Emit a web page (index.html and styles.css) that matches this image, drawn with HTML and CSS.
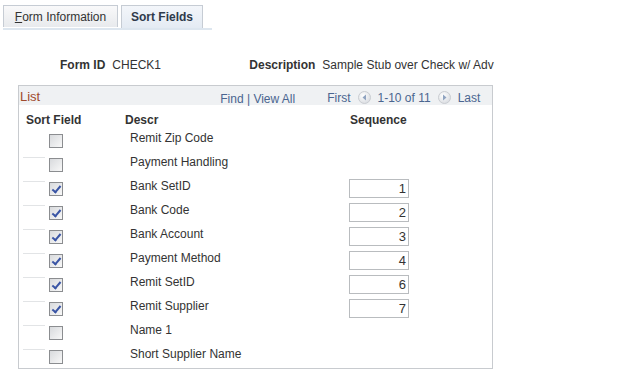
FILE: index.html
```html
<!DOCTYPE html>
<html lang="en">
<head>
    <meta charset="UTF-8">
    <title>Sort Fields</title>
    <link rel="stylesheet" href="styles.css">
</head>
<body>

<div class="tabs">
    <div class="tab"><u>F</u>orm Information</div>
    <div class="tab active">Sort Fields</div>
</div>

<div class="info">
    <span class="lbl">Form ID</span>
    <span class="val id">CHECK1</span>
    <span class="lbl">Description</span>
    <span class="val">Sample Stub over Check w/ Adv</span>
</div>

<div class="grid">
    <div class="grid-head">
        <span class="title">List</span>
        <span class="find"><a>Find</a> | <a>View All</a></span>
        <span class="nav">
            First
            <svg class="arrow" width="13" height="13" viewBox="0 0 13 13"><defs><radialGradient id="g" cx="0.4" cy="0.35" r="0.7"><stop offset="0" stop-color="#ffffff"/><stop offset="1" stop-color="#d8dbe0"/></radialGradient></defs><circle cx="6.5" cy="6.5" r="6" fill="url(#g)" stroke="#c9ccd1"/><path d="M8 3.5 L4.5 6.5 L8 9.5 Z" fill="#8fa3c0"/></svg>
            1-10 of 11
            <svg class="arrow" width="13" height="13" viewBox="0 0 13 13"><circle cx="6.5" cy="6.5" r="6" fill="url(#g)" stroke="#c9ccd1"/><path d="M5 3.5 L8.5 6.5 L5 9.5 Z" fill="#8fa3c0"/></svg>
            Last
        </span>
    </div>

    <div class="cols">
        <span class="c-sort">Sort Field</span>
        <span class="c-descr">Descr</span>
        <span class="c-seq">Sequence</span>
    </div>

    <div class="row first">
        <span class="c-sort"><span class="chk"></span></span>
        <span class="c-descr">Remit Zip Code</span>
    </div>
    <div class="row">
        <span class="c-sort"><span class="chk"></span></span>
        <span class="c-descr">Payment Handling</span>
    </div>
    <div class="row">
        <span class="c-sort"><span class="chk on"></span></span>
        <span class="c-descr">Bank SetID</span>
        <span class="seq">1</span>
    </div>
    <div class="row">
        <span class="c-sort"><span class="chk on"></span></span>
        <span class="c-descr">Bank Code</span>
        <span class="seq">2</span>
    </div>
    <div class="row">
        <span class="c-sort"><span class="chk on"></span></span>
        <span class="c-descr">Bank Account</span>
        <span class="seq">3</span>
    </div>
    <div class="row">
        <span class="c-sort"><span class="chk on"></span></span>
        <span class="c-descr">Payment Method</span>
        <span class="seq">4</span>
    </div>
    <div class="row">
        <span class="c-sort"><span class="chk on"></span></span>
        <span class="c-descr">Remit SetID</span>
        <span class="seq">6</span>
    </div>
    <div class="row">
        <span class="c-sort"><span class="chk on"></span></span>
        <span class="c-descr">Remit Supplier</span>
        <span class="seq">7</span>
    </div>
    <div class="row">
        <span class="c-sort"><span class="chk"></span></span>
        <span class="c-descr">Name 1</span>
    </div>
    <div class="row">
        <span class="c-sort"><span class="chk"></span></span>
        <span class="c-descr">Short Supplier Name</span>
    </div>
</div>

</body>
</html>
```

FILE: styles.css
```css
body {
    margin: 0;
    font-family: "Liberation Sans", Arial, sans-serif;
    font-size: 12px;
    color: #333;
    background: #fff;
}
.tabs {
    display: flex;
    gap: 3px;
    width: 209px;
    margin: 5px 0 0 3px;
    border-bottom: 2px solid #dde6ef;
}
.tab {
    width: 113px;
    height: 21px;
    line-height: 22px;
    text-align: center;
    border: 1px solid #c6ccd4;
    border-bottom: none;
    background: linear-gradient(#f9f9fa, #e8eaed);
    color: #333;
}
.tab.active {
    width: 80px;
    height: 22px;
    font-weight: bold;
    background: linear-gradient(#f3f6fa, #e4ebf3);
    color: #2f3a4a;
}
.info {
    display: flex;
    align-items: center;
    margin: 28px 0 0 60px;
    height: 14px;
}
.lbl {
    font-weight: bold;
    margin-right: 7px;
}
.val.id {
    width: 137px;
}
.grid {
    width: 473px;
    margin: 13px 0 0 18px;
    border: 1px solid #c8cbcf;
}
.grid-head {
    display: flex;
    height: 19px;
    background: #eff1f3;
}
.title {
    color: #a04a2c;
    margin: 3px 0 0 1px;
    font-size: 13px;
}
.find {
    margin: 6px 0 0 180px;
    color: #4a6590;
}
.nav {
    display: flex;
    align-items: center;
    gap: 5px;
    margin: 5px 0 0 32px;
    height: 14px;
    color: #4a6590;
}
.arrow {
    margin: -2px 2px 0;
}
.cols {
    display: flex;
    font-weight: bold;
    padding-top: 8px;
    height: 18px;
}
.c-sort {
    width: 106px;
    padding-left: 7px;
    box-sizing: border-box;
    position: relative;
}
.c-descr {
    width: 225px;
}
.row {
    display: flex;
    height: 24px;
}
.row:last-child {
    height: 21px;
}
.row .c-descr {
    padding-left: 5px;
    width: 220px;
    line-height: 14px;
}
.row .c-sort::before {
    content: "";
    position: absolute;
    left: 4px;
    top: 2px;
    width: 22px;
    height: 1px;
    background: #e2e4e6;
}
.row.first .c-sort::before {
    display: none;
}
.chk {
    display: block;
    width: 12px;
    height: 12px;
    margin: 3px 0 0 23px;
    border: 1px solid #8b8d90;
    background: linear-gradient(135deg, #d8dadd, #f8f8f8);
    position: relative;
}
.chk.on::after {
    content: "";
    position: absolute;
    left: 4px;
    top: 1px;
    width: 3px;
    height: 7px;
    border: solid #3a55a5;
    border-width: 0 2px 2px 0;
    transform: rotate(40deg);
}
.seq {
    width: 56px;
    height: 17px;
    margin-left: -1px;
    border: 1px solid #b9bcbf;
    text-align: right;
    padding-right: 2px;
    font-size: 13px;
    line-height: 18px;
}
```
